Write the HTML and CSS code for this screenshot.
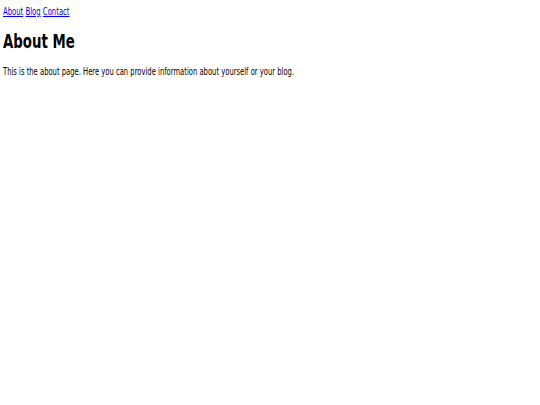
FILE: index.html
```html
<!DOCTYPE html>
<html>
<head>
<meta charset="utf-8">
<link rel="stylesheet" href="styles.css">
</head>
<body>
<nav class="nav"><span class="squeeze nav-inner"><a href="#">About</a> <a href="#">Blog</a> <a href="#">Contact</a></span></nav>
<h1 class="title"><span class="squeeze title-inner">About Me</span></h1>
<p class="text"><span class="squeeze text-inner">This is the about page. Here you can provide information about yourself or your blog.</span></p>
</body>
</html>
```
FILE: styles.css
```css
html, body { background: #fff; }
body {
  margin: 5px 3px 3px;
  font-family: "DejaVu Sans", "Liberation Sans", sans-serif;
  color: #000;
}
.squeeze {
  display: inline-block;
  transform-origin: 0 0;
  white-space: nowrap;
}
.nav {
  font-size: 11px;
  line-height: 13px;
  height: 13px;
}
.nav a { color: #0000ee; }
.nav-inner { transform: scaleX(0.624); }
.title {
  font-size: 19px;
  font-weight: bold;
  line-height: 22px;
  height: 22px;
  margin: 12px 0 0;
}
.title-inner { transform: scaleX(0.70); }
.text {
  font-size: 11px;
  line-height: 13px;
  height: 13px;
  margin: 13px 0 0;
}
.text-inner { transform: scaleX(0.618); }
```
